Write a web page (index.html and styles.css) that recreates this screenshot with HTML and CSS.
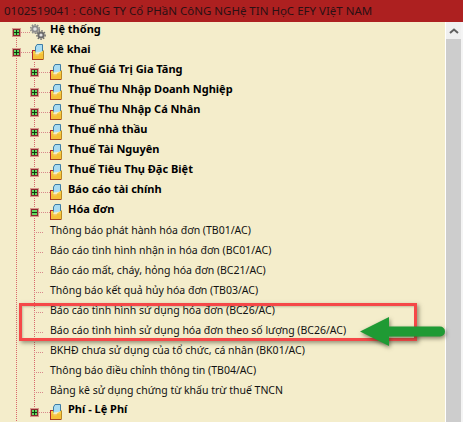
FILE: index.html
```html
<!DOCTYPE html>
<html lang="en">

<head>
  <meta charset="UTF-8" />
  <title>Kê khai</title>
  <link rel="stylesheet" href="styles.css">
</head>

<body>
  <svg class="defs" width="0" height="0">
    <symbol id="folder" viewBox="0 0 12 16">
      <path d="M0 6H3V16H0z" fill="#b3262c" />
      <path d="M3.500 8.500V3L5 .5H10.500V7.500" fill="#a9dcf2" stroke="#3d7da6" />
      <path d="M1 7H3.500V11.500H6.500L7 9.500 11.500 6.500V15H1z" fill="#f9cf45" />
      <path d="M1 10 11.500 10V15H1z" fill="#f3b52e" opacity=".55" />
      <path d="M.5 15.500H11.500" stroke="#a8451e" />
      <path d="M11.500 6.500V15" stroke="#b98a24" />
    </symbol>
    <symbol id="gears" viewBox="0 0 16 16">
      <circle cx="5" cy="5" r="2.800" fill="#e2e2e2" stroke="#8c8c8c" stroke-width="2" />
      <circle cx="5" cy="5" r="4.400" fill="none" stroke="#8c8c8c" stroke-width="1.400" stroke-dasharray="1.500 1.300" />
      <circle cx="11" cy="11" r="2.600" fill="#e2e2e2" stroke="#6c6c6c" stroke-width="2" />
      <circle cx="11" cy="11" r="4.200" fill="none" stroke="#6c6c6c" stroke-width="1.400" stroke-dasharray="1.500 1.300" />
    </symbol>
  </svg>

  <header class="title-bar">0102519041 : CôNG TY Cổ PHầN CôNG NGHệ TIN HọC EFY VIệT NAM</header>

  <div class="window">
    <main class="tree">
      <div class="branch-top">
        <div class="row">
          <span class="toggle plus"></span><span class="stub gear-stub"></span>
          <svg class="gear-icon"><use href="#gears" /></svg>
          <span class="label bold">Hệ thống</span>
        </div>
        <div class="row">
          <span class="toggle plus"></span><span class="stub"></span>
          <svg class="icon"><use href="#folder" /></svg>
          <span class="label bold">Kê khai</span>
        </div>
      </div>

      <div class="branch">
        <div class="row sub"><span class="toggle plus"></span><span class="stub"></span><svg class="icon"><use href="#folder" /></svg><span class="label bold">Thuế Giá Trị Gia Tăng</span></div>
        <div class="row sub"><span class="toggle plus"></span><span class="stub"></span><svg class="icon"><use href="#folder" /></svg><span class="label bold">Thuế Thu Nhập Doanh Nghiệp</span></div>
        <div class="row sub"><span class="toggle plus"></span><span class="stub"></span><svg class="icon"><use href="#folder" /></svg><span class="label bold">Thuế Thu Nhập Cá Nhân</span></div>
        <div class="row sub"><span class="toggle plus"></span><span class="stub"></span><svg class="icon"><use href="#folder" /></svg><span class="label bold">Thuế nhà thầu</span></div>
        <div class="row sub"><span class="toggle plus"></span><span class="stub"></span><svg class="icon"><use href="#folder" /></svg><span class="label bold">Thuế Tài Nguyên</span></div>
        <div class="row sub"><span class="toggle plus"></span><span class="stub"></span><svg class="icon"><use href="#folder" /></svg><span class="label bold">Thuế Tiêu Thụ Đặc Biệt</span></div>
        <div class="row sub"><span class="toggle plus"></span><span class="stub"></span><svg class="icon"><use href="#folder" /></svg><span class="label bold">Báo cáo tài chính</span></div>
        <div class="row sub"><span class="toggle minus"></span><span class="stub"></span><svg class="icon"><use href="#folder" /></svg><span class="label bold">Hóa đơn</span></div>
        <div class="row leaf"><span class="stub"></span><span class="label">Thông báo phát hành hóa đơn (TB01/AC)</span></div>
        <div class="row leaf"><span class="stub"></span><span class="label">Báo cáo tình hình nhận in hóa đơn (BC01/AC)</span></div>
        <div class="row leaf"><span class="stub"></span><span class="label">Báo cáo mất, cháy, hỏng hóa đơn (BC21/AC)</span></div>
        <div class="row leaf"><span class="stub"></span><span class="label">Thông báo kết quả hủy hóa đơn (TB03/AC)</span></div>
        <div class="row leaf"><span class="stub"></span><span class="label">Báo cáo tình hình sử dụng hóa đơn (BC26/AC)</span></div>
        <div class="row leaf"><span class="stub"></span><span class="label">Báo cáo tình hình sử dụng hóa đơn theo số lượng (BC26/AC)</span></div>
        <div class="row leaf"><span class="stub"></span><span class="label">BKHĐ chưa sử dụng của tổ chức, cá nhân (BK01/AC)</span></div>
        <div class="row leaf"><span class="stub"></span><span class="label">Thông báo điều chỉnh thông tin (TB04/AC)</span></div>
        <div class="row leaf"><span class="stub"></span><span class="label">Bảng kê sử dụng chứng từ khấu trừ thuế TNCN</span></div>
        <div class="row sub last"><span class="toggle plus"></span><span class="stub"></span><svg class="icon"><use href="#folder" /></svg><span class="label bold">Phí - Lệ Phí</span></div>
      </div>
    </main>

    <div class="scrollbar">
      <div class="scroll-btn">
        <svg width="10" height="6" viewBox="0 0 10 6"><path d="M1 5 5 1.500 9 5" fill="none" stroke="#606060" stroke-width="2" /></svg>
      </div>
    </div>
  </div>

  <!-- annotation drawn on top of the screenshot -->
  <div class="callout"></div>
  <svg class="arrow" width="95" height="40" viewBox="0 0 95 40">
    <path d="M0 15.500 29 1V10.500H80a5 5 0 0 1 0 10H29V30z" fill="#1f9a34" />
  </svg>
</body>

</html>
```

FILE: styles.css
```css
* {
  padding: 0;
  margin: 0;
  box-sizing: border-box;
}

html,
body {
  height: 100%;
  overflow: hidden;
}

body {
  display: flex;
  flex-direction: column;
  background-color: #f4edcb;
  font-family: "Noto Sans", sans-serif;
  font-size: 10.5px;
  color: #111;
}

.defs {
  position: absolute;
}

.title-bar {
  height: 22px;
  line-height: 21px;
  padding-left: 4px;
  flex-shrink: 0;
  background-color: #ad2020;
  color: #2b1014;
  font-size: 11.5px;
  white-space: nowrap;
}

.window {
  display: flex;
  flex: 1;
  min-height: 0;
}

.tree {
  flex: 1;
  min-width: 0;
  overflow: hidden;
  background-image: linear-gradient(#f4edcb, #f4edcb), linear-gradient(#d8686c 50%, transparent 50%);
  background-size: 1px 14px, 1px 2px;
  background-position: 16px 0, 16px 0;
  background-repeat: no-repeat, repeat-y;
}

.branch-top {
  padding-left: 12px;
}

.branch {
  margin-left: 34px;
  background-image: linear-gradient(#d8686c 50%, transparent 50%);
  background-size: 1px 2px;
  background-repeat: repeat-y;
}

.row {
  display: flex;
  height: 20px;
  white-space: nowrap;
}

.row>* {
  flex-shrink: 0;
}

.toggle {
  position: relative;
  width: 9px;
  height: 9px;
  margin-top: 6px;
  background-color: #63d760;
  border: 1px solid #d8988c;
  box-shadow: inset 0 0 0 1px #8c2a30;
}

.toggle::before {
  content: "";
  position: absolute;
  left: 1px;
  top: 3px;
  width: 5px;
  height: 1px;
  background-color: #0e3a10;
}

.plus::after {
  content: "";
  position: absolute;
  left: 3px;
  top: 1px;
  width: 1px;
  height: 5px;
  background-color: #0e3a10;
}

.stub {
  width: 11px;
  height: 1px;
  margin-top: 10px;
  background-image: linear-gradient(to right, #d8888c 50%, transparent 50%);
  background-size: 2px 1px;
}

.gear-stub {
  width: 9px;
}

.icon {
  width: 12px;
  height: 16px;
  margin-top: 2px;
  margin-right: 6px;
}

.gear-icon {
  width: 16px;
  height: 16px;
  margin-top: 2px;
  margin-right: 4px;
}

.label {
  line-height: 16px;
}

.bold {
  font-weight: 700;
  font-size: 11px;
  line-height: 14px;
  color: #000;
}

.sub {
  margin-left: -4px;
}

.last {
  background-image: linear-gradient(transparent 8px, #f4edcb 8px);
}

.leaf .stub {
  width: 10px;
  margin-right: 6px;
}

.scrollbar {
  width: 18px;
  flex-shrink: 0;
  background-color: #cdcdcd;
  border-left: 1px solid #fff;
  border-right: 2px solid #f4f4f4;
}

.scroll-btn {
  height: 17px;
  background-color: #f0f0f0;
  display: flex;
  align-items: center;
  justify-content: center;
}

.callout {
  position: absolute;
  left: 19px;
  top: 303px;
  width: 398px;
  height: 38px;
  border: 3px solid #f54848;
  box-shadow: 2px 2px 4px rgba(60, 60, 40, 0.5), inset 1px 1px 2px rgba(60, 60, 40, 0.25);
}

.arrow {
  position: absolute;
  left: 360px;
  top: 316px;
  filter: drop-shadow(1px 2px 2px rgba(40, 40, 20, 0.55));
}
```
